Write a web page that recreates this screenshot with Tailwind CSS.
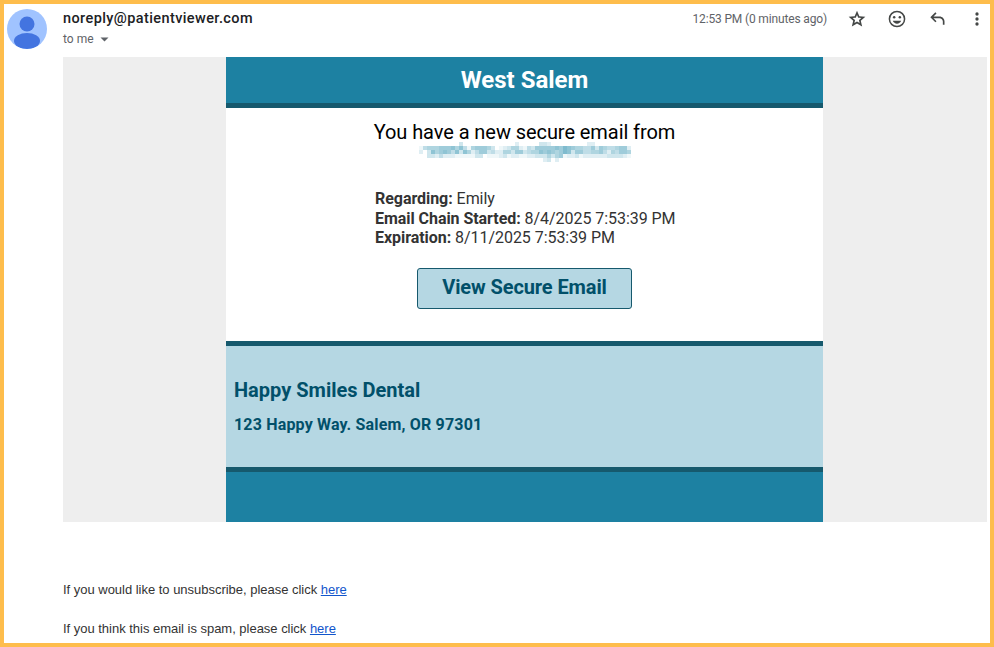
<!DOCTYPE html>
<html lang="en">
<head>
<meta charset="UTF-8">
<title>Secure email</title>
<script src="https://cdn.jsdelivr.net/npm/@tailwindcss/browser@4"></script>
</head>
<body class="bg-white">
<div class="h-[647px] w-[994px] overflow-hidden border-4 border-[#febd4c] bg-white font-['Roboto',sans-serif]">
  <!-- Message header -->
  <div class="flex h-[53px] items-start">
    <div class="w-[59px] pl-[3px] pt-[5px]">
      <svg width="40" height="40" viewBox="0 0 40 40">
        <defs><clipPath id="avatarClip"><circle cx="20" cy="20" r="20"/></clipPath></defs>
        <circle cx="20" cy="20" r="20" fill="#a0c3ff"/>
        <g clip-path="url(#avatarClip)">
          <circle cx="20" cy="15" r="7.5" fill="#4374e0"/>
          <ellipse cx="20" cy="32" rx="13" ry="8" fill="#4374e0"/>
        </g>
      </svg>
    </div>
    <div class="pt-[6px]">
      <div class="text-[14.5px] leading-[18px] font-medium tracking-[0.4px] text-[#202124]">noreply@patientviewer.com</div>
      <div class="mt-[3px] flex items-center text-[12px] leading-[16px] text-[#5f6368]">to me
        <svg class="ml-[6px] mt-[1px]" width="9" height="5" viewBox="0 0 9 5"><path d="M0.5 0.5h8l-4 4z" fill="#5f6368"/></svg>
      </div>
    </div>
    <div class="ml-auto flex items-center pr-[3px] pt-[5px]">
      <span class="mr-[20px] text-[12px] leading-[20px] tracking-[-0.15px] text-[#5f6368]">12:53 PM (0 minutes ago)</span>
      <svg class="mr-[20px]" width="20" height="20" viewBox="0 0 24 24" fill="#444746"><path d="M12 7.13l.97 2.29.47 1.11 1.2.1 2.47.21-1.88 1.63-.91.79.27 1.18.56 2.41-2.12-1.28-1.03-.64-1.03.62-2.12 1.28.56-2.41.27-1.18-.91-.79-1.88-1.63 2.47-.21 1.2-.1.47-1.11.97-2.27M12 2L9.19 8.63 2 9.24l5.46 4.73L5.82 21 12 17.27 18.18 21l-1.64-7.03L22 9.24l-7.19-.61L12 2z"/></svg>
      <svg class="mr-[20px]" width="20" height="20" viewBox="0 0 24 24" fill="#444746"><path d="M12 2a10 10 0 1 0 0 20 10 10 0 0 0 0-20zm0 18.2a8.2 8.2 0 1 1 0-16.4 8.2 8.2 0 0 1 0 16.4z"/><circle cx="8.6" cy="9.8" r="1.5"/><circle cx="15.4" cy="9.8" r="1.5"/><path d="M12 17.6c2.3 0 4.3-1.4 5-3.5H7c.7 2.1 2.7 3.5 5 3.5z"/></svg>
      <svg class="mr-[20px]" width="20" height="20" viewBox="0 0 24 24" fill="#444746"><path d="M21 19h-2v-4c0-2.2-1.8-4-4-4H7.83l3.58 3.59L10 16l-6-6 6-6 1.41 1.41L7.83 9H15c3.31 0 6 2.69 6 6v4z"/></svg>
      <svg width="20" height="20" viewBox="0 0 24 24" fill="#444746"><circle cx="12" cy="6" r="2"/><circle cx="12" cy="12" r="2"/><circle cx="12" cy="18" r="2"/></svg>
    </div>
  </div>

  <!-- Email body -->
  <div class="ml-[59px] mr-[3px] flex h-[465px] justify-center bg-[#eeeeee] pr-[1px]">
    <div class="flex w-[597px] flex-col bg-white">
      <div class="h-[51px] border-b-[5px] border-[#16596d] bg-[#1d81a2] text-center text-[24px] leading-[46px] font-bold text-white">West Salem</div>
      <div class="h-[233px]">
        <div class="pt-[12px] text-center text-[20px] leading-[24px] tracking-[-0.07px] text-black">You have a new secure email from</div>
        <!-- pixelated sender address -->
        <svg id="mosaic" class="mx-auto -mt-[2px] block" width="212" height="20" viewBox="0 0 212 20" shape-rendering="crispEdges"></svg>
        <div class="ml-[149px] mt-[27px] text-[16px] leading-[19.5px] tracking-[-0.05px] text-[#333333]">
          <div><b class="font-bold">Regarding:</b> Emily</div>
          <div><b class="font-bold">Email Chain Started:</b> 8/4/2025 7:53:39 PM</div>
          <div><b class="font-bold">Expiration:</b> 8/11/2025 7:53:39 PM</div>
        </div>
        <a class="mx-auto mt-[20px] block h-[41px] w-[215px] rounded-[3px] border border-[#16596d] bg-[#b5d7e3] text-center text-[20px] leading-[37px] font-bold tracking-[-0.1px] text-[#01506a]">View Secure Email</a>
      </div>
      <div class="h-[131px] border-y-[5px] border-[#16596d] bg-[#b5d7e3] pl-[8px] text-[#01506a]">
        <div class="pt-[30px] text-[20px] leading-[28px] font-bold">Happy Smiles Dental</div>
        <div class="mt-[11px] text-[16px] leading-[20px] font-bold tracking-[0.17px]">123 Happy Way. Salem, OR 97301</div>
      </div>
      <div class="flex-1 bg-[#1d81a2]"></div>
    </div>
  </div>

  <!-- Footer links -->
  <div class="ml-[59px] pt-[60px] font-['Liberation_Sans',sans-serif] text-[13px] leading-[16px] tracking-[-0.02px] text-[#333333]">
    <p>If you would like to unsubscribe, please click <a class="text-[#1155cc] underline">here</a></p>
    <p class="mt-[23px]">If you think this email is spam, please click <a class="text-[#1155cc] underline">here</a></p>
  </div>
</div>
<script>
  // Shade per 4px cell, 0 = white, 9 = darkest
  const rows = [
    '00000000003000000000000020000033200000000022000000000',
    '14555666757415666530123552143666667687655446365445662',
    '20375676473752466342255366345576765687366445564254665',
    '00332422211111330111231221122333535612231222222333321',
    '00000000000000000000000000000002302000000000000000000'
  ];
  const mosaic = document.getElementById('mosaic');
  rows.forEach((row, y) => {
    [...row].forEach((shade, x) => {
      if (shade === '0') return;
      const rect = document.createElementNS('http://www.w3.org/2000/svg', 'rect');
      rect.setAttribute('x', x * 4);
      rect.setAttribute('y', y * 4);
      rect.setAttribute('width', 4);
      rect.setAttribute('height', 4);
      rect.setAttribute('fill', '#6fb3c8');
      rect.setAttribute('fill-opacity', shade / 9);
      mosaic.appendChild(rect);
    });
  });
</script>
</body>
</html>
